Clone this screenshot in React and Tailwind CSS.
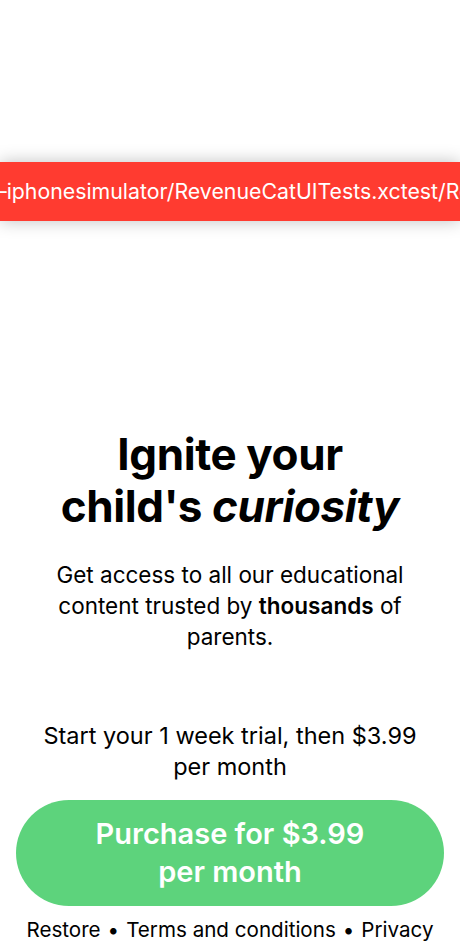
export default function App() {
  return (
    <div className="w-[460px] h-[950px] bg-white overflow-hidden flex flex-col" style={{ fontFamily: "Inter, 'Noto Sans', sans-serif" }}>
      <div className="h-[162px] shrink-0" />
      <div className="h-[59px] shrink-0 bg-[#ff3b30] shadow-[0_0_16px_rgba(0,0,0,0.25)] flex items-center overflow-hidden">
        <span className="whitespace-nowrap text-white text-[21.3px] -ml-[4px]">–iphonesimulator/RevenueCatUITests.xctest/RevenueCatUI_RevenueCatUITests.bundle</span>
      </div>
      <div className="flex-1 flex flex-col items-center justify-end pb-[6px]">
        <h1 className="text-center font-bold text-[44px] leading-[52px] tracking-[-0.4px] text-black">
          Ignite your<br />child's <em className="italic">curiosity</em>
        </h1>
        <p className="mt-[27px] text-center text-[22.5px] leading-[31px] text-black px-[40px]">
          Get access to all our educational content trusted by <strong className="font-semibold">thousands</strong> of parents.
        </p>
        <p className="mt-[68px] text-center text-[23.5px] leading-[31px] text-black px-[30px]">
          Start your 1 week trial, then $3.99 per month
        </p>
        <button className="mt-[18px] w-[428px] h-[106px] rounded-full bg-[#5dd37c] text-white font-semibold text-[29px] leading-[38px] flex items-center justify-center text-center px-[60px]">
          Purchase for $3.99 per month
        </button>
        <div className="mt-[10px] text-[20.6px] leading-[28px] text-black whitespace-nowrap flex items-center">
          <span>Restore</span>
          <span className="mx-[7px]">•</span>
          <span>Terms and conditions</span>
          <span className="mx-[7px]">•</span>
          <span>Privacy</span>
        </div>
      </div>
    </div>
  );
}
